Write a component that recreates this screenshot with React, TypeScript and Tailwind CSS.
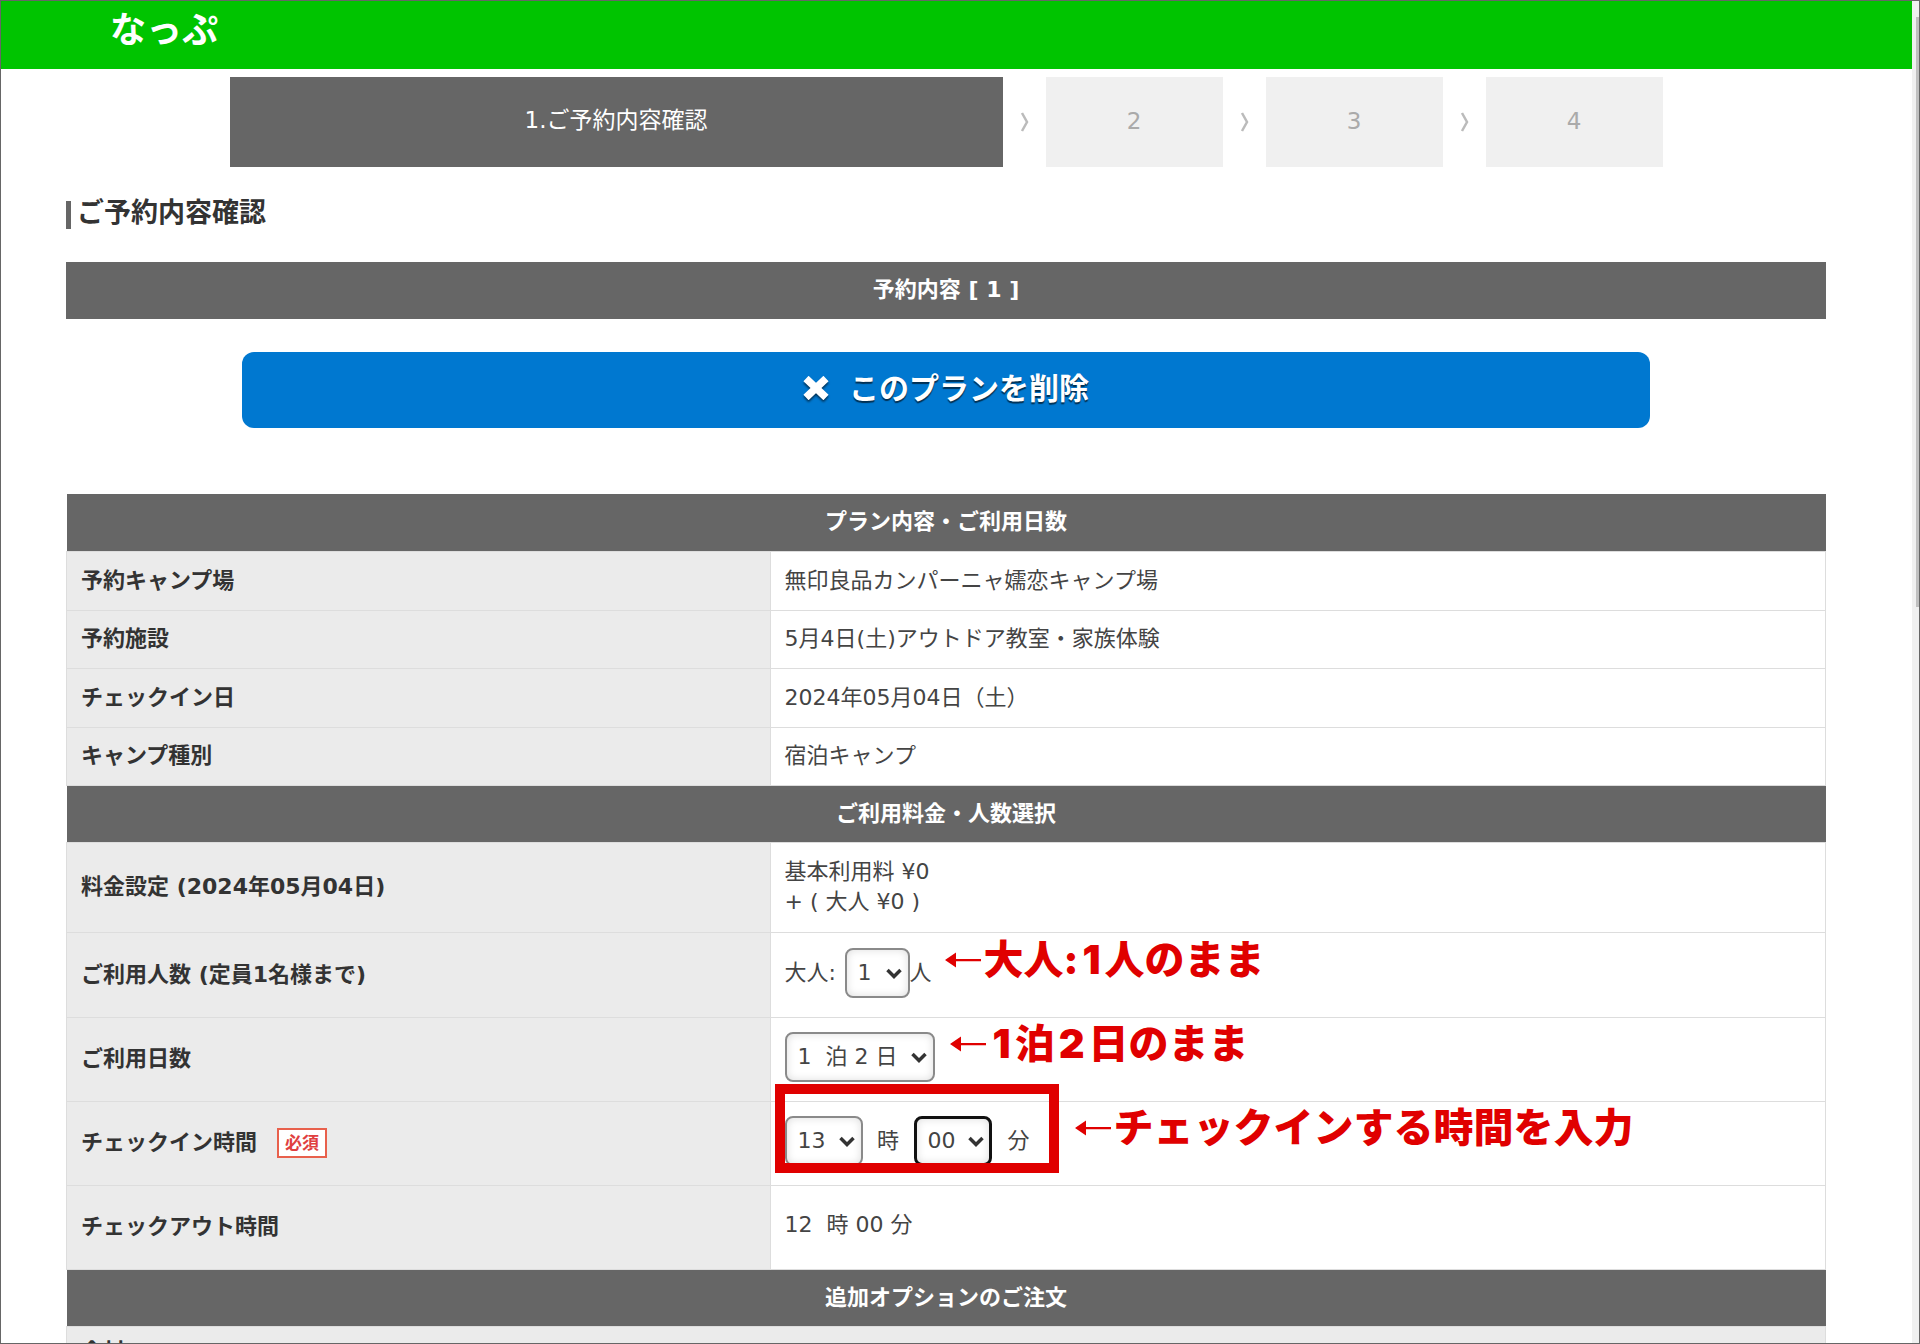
import { ReactNode } from 'react'
import clsx from 'clsx'

const steps = ['2', '3', '4']

interface SelectProps {
  label: string
  options: string[]
  className?: string
  focused?: boolean
}

function SelectBox({ label, options, className, focused = false }: SelectProps) {
  return (
    <span className={clsx('relative inline-block h-[50px]', className)}>
      <select
        aria-label={label}
        className={clsx(
          'block h-full w-full appearance-none rounded-lg bg-white pl-[11px] text-[22px] leading-[30px] text-[#444] shadow-[inset_0_0_8px_#ddd] outline-none',
          focused ? 'border-[3px] border-[#111]' : 'border-2 border-[#8a8a8a]'
        )}
      >
        {options.map((option) => (
          <option key={option}>{option}</option>
        ))}
      </select>
      <svg
        viewBox="0 0 16 11"
        className="pointer-events-none absolute top-5 right-2 h-[11px] w-4"
        fill="none"
        stroke="#333"
        strokeWidth="3.5"
      >
        <path d="M1.5 2 L8 8.5 L14.5 2" />
      </svg>
    </span>
  )
}

function Note({ children, className }: { children: ReactNode; className?: string }) {
  return (
    <span
      className={clsx(
        'absolute flex items-center gap-[3px] text-[40px] leading-[40px] font-black whitespace-nowrap text-[#e00000]',
        className
      )}
    >
      <svg viewBox="0 0 36 16" className="h-4 w-9" fill="#e00000">
        <path d="M0 8 L11 0.5 V7 H36 V9.3 H11 V15.5 Z" />
      </svg>
      <span className="font-['Inter','Noto_Sans_CJK_JP',sans-serif]">{children}</span>
    </span>
  )
}

function SectionRow({ children }: { children: ReactNode }) {
  return (
    <tr>
      <th
        colSpan={2}
        scope="colgroup"
        className="h-[57px] bg-[#666] text-center leading-[30px] font-bold text-white"
      >
        {children}
      </th>
    </tr>
  )
}

interface RowProps {
  label: ReactNode
  children?: ReactNode
  className?: string
}

function Row({ label, children, className = 'h-[59px]' }: RowProps) {
  return (
    <tr className={className}>
      <th
        scope="row"
        className="border border-[#ddd] bg-[#ebebeb] px-3.5 text-left leading-[30px] font-bold"
      >
        {label}
      </th>
      <td className="border border-[#ddd] bg-white px-3.5 leading-[30px] text-[#444]">{children}</td>
    </tr>
  )
}

export default function App() {
  return (
    <div className="flex h-screen overflow-hidden border border-[#666] bg-white font-['DejaVu_Sans','Noto_Sans_CJK_JP',sans-serif] text-[22px] text-[#333]">

      <div className="min-w-0 flex-1">

        {/* Header */}

        <header className="h-[68px] bg-[#00c400] pt-2.5 pl-[109px]">
          <a href="#" className="block text-[36px] leading-[40px] font-bold text-white">
            なっぷ
          </a>
        </header>

        <main className="pr-[86px] pl-[65px]">

          {/* Steps */}

          <ol className="mx-auto mt-2 flex h-[90px] w-[1433px] max-w-full text-[23px]">
            <li className="flex flex-1 items-center justify-center bg-[#666] pb-1 text-white">
              1.ご予約内容確認
            </li>
            {steps.map((step) => (
              <li key={step} className="flex">
                <span className="flex w-[43px] items-center justify-center">
                  <svg viewBox="0 0 10 20" className="h-5 w-2.5" fill="none" stroke="#bbb" strokeWidth="2.5">
                    <path d="M3 1 L8 10 L3 19" />
                  </svg>
                </span>
                <span className="flex w-[177px] items-center justify-center bg-[#f0f0f0] pb-0.5 text-[#aaa]">
                  {step}
                </span>
              </li>
            ))}
          </ol>

          {/* Title */}

          <div className="mt-[26px] flex h-10 items-center gap-1.5">
            <span className="mt-1 h-7 w-[5px] bg-[#666]" />
            <h1 className="text-[27px] leading-[40px] font-bold">ご予約内容確認</h1>
          </div>

          <h2 className="mt-[29px] bg-[#666] pt-[13px] pb-3.5 text-center leading-[30px] font-bold text-white">
            予約内容 [ 1 ]
          </h2>

          <button
            type="button"
            className="mx-auto mt-[33px] flex h-[76px] w-4/5 items-center justify-center gap-5 rounded-xl bg-[#0078d0] pb-1 text-[30px] font-bold text-white text-shadow-[0_2px_1px_#00000099]"
          >
            <svg
              viewBox="0 0 26 24"
              className="h-6 w-[26px] drop-shadow-[0_2px_1px_#00000099]"
              fill="none"
              stroke="#fff"
              strokeWidth="7.5"
            >
              <path d="M3 2.5 L23 21.5 M23 2.5 L3 21.5" />
            </svg>
            このプランを削除
          </button>

          {/* Reservation table */}

          <table className="mt-[66px] w-full table-fixed border-collapse">
            <colgroup>
              <col className="w-2/5" />
              <col />
            </colgroup>
            <tbody>
              <SectionRow>プラン内容・ご利用日数</SectionRow>
              <Row label="予約キャンプ場">無印良品カンパーニャ嬬恋キャンプ場</Row>
              <Row label="予約施設" className="h-[58px]">
                5月4日(土)アウトドア教室・家族体験
              </Row>
              <Row label="チェックイン日">2024年05月04日（土）</Row>
              <Row label="キャンプ種別" className="h-[58px]">
                宿泊キャンプ
              </Row>

              <SectionRow>ご利用料金・人数選択</SectionRow>
              <Row label="料金設定 (2024年05月04日)" className="h-[90px]">
                基本利用料 ¥0
                <br />+ ( 大人 ¥0 )
              </Row>
              <Row label="ご利用人数 (定員1名様まで)" className="h-[85px]">
                <div className="relative flex items-center pb-1">
                  <span className="w-[60px]">大人:</span>
                  <SelectBox label="大人の人数" options={['1']} className="w-[65px]" />
                  人
                  <Note className="-top-2 left-[160px]">
                    大人:<span className="mx-1">1</span>人のまま
                  </Note>
                </div>
              </Row>
              <Row label="ご利用日数" className="h-[84px]">
                <div className="relative flex items-center pb-1">
                  <SelectBox label="ご利用日数" options={['1\u00a0 泊 2 日']} className="w-[150px]" />
                  <Note className="-top-2 left-[165px]">
                    <span className="mx-1">1</span>泊<span className="mx-1">2</span>日のまま
                  </Note>
                </div>
              </Row>
              <Row
                label={
                  <span className="flex items-center gap-5">
                    チェックイン時間
                    <span className="border-2 border-[#e8604c] bg-white px-1.5 text-[17px] leading-[26px] text-[#e04040]">
                      必須
                    </span>
                  </span>
                }
                className="h-[84px]"
              >
                <div className="relative flex items-center pb-1">
                  <SelectBox label="チェックイン時" options={['13']} className="w-[78px]" />
                  <span className="w-[51px] text-center">時</span>
                  <SelectBox label="チェックイン分" options={['00']} className="w-[78px]" focused />
                  <span className="w-[54px] text-center">分</span>
                  <span className="absolute -top-8 -left-[10px] h-[89px] w-[284px] border-10 border-[#e00000]" />
                  <Note className="-top-2 left-[290px]">チェックインする時間を入力</Note>
                </div>
              </Row>
              <Row label="チェックアウト時間" className="h-[84px]">
                <div className="pb-1">12&nbsp; 時 00 分</div>
              </Row>

              <SectionRow>追加オプションのご注文</SectionRow>
              <tr className="h-[52px]">
                <th
                  colSpan={2}
                  scope="colgroup"
                  className="border border-[#ddd] bg-[#ebebeb] px-3.5 text-left leading-[30px] font-bold"
                >
                  食材
                </th>
              </tr>
            </tbody>
          </table>

        </main>

      </div>

      {/* Scrollbar */}

      <div className="w-[7px] bg-[#f0f0f0] pt-4 pl-1">
        <div className="h-[590px] bg-[#c0c0c0]" />
      </div>

    </div>
  )
}
